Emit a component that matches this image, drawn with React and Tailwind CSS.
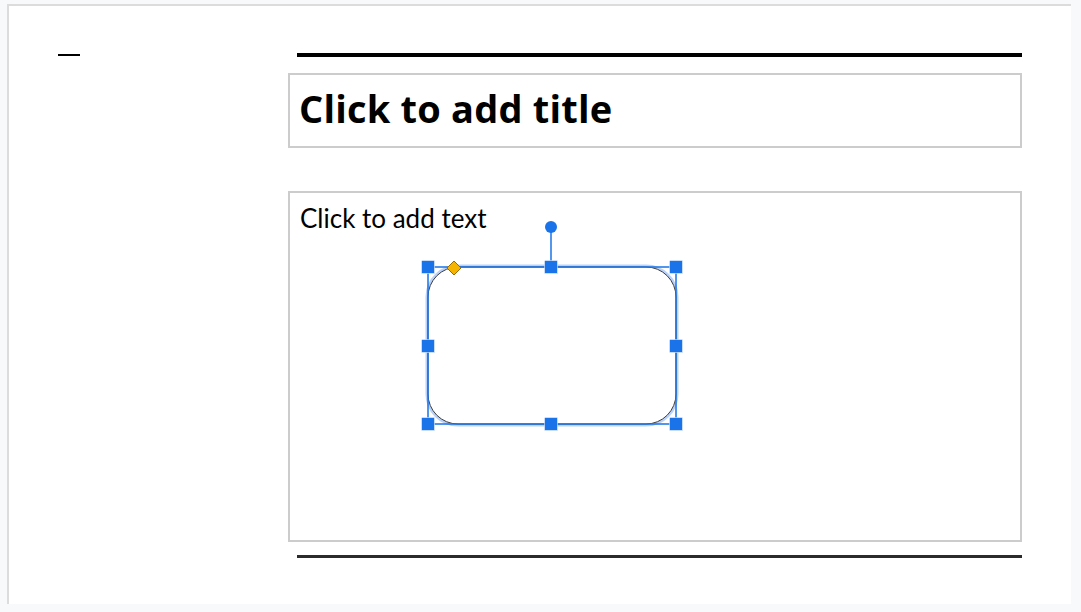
import React from "react";

// Selection handles around the shape (coords relative to body placeholder padding box)
const handles = [
  [138, 74], [261, 74], [386, 74],
  [138, 153], [386, 153],
  [138, 231], [261, 231], [386, 231],
];

const ShapeSelection = () => (
  <svg
    className="absolute left-0 top-0 pointer-events-none"
    width="730"
    height="347"
    viewBox="0 0 730 347"
  >
    {/* hover glow */}
    <rect x="138" y="74" width="248" height="157" rx="30" fill="none" stroke="#a8c7fa" strokeWidth="5" opacity="0.8" />
    {/* shape */}
    <rect x="138" y="74" width="248" height="157" rx="30" fill="#ffffff" stroke="#3c3c3c" strokeWidth="1" />
    {/* bounding box */}
    <rect x="138" y="74" width="248" height="157" fill="none" stroke="#1a73e8" strokeWidth="1.5" />
    {/* rotate handle */}
    <line x1="261" y1="34" x2="261" y2="68" stroke="#1a73e8" strokeWidth="1.5" />
    <circle cx="261" cy="34" r="6" fill="#1a73e8" />
    {handles.map(([x, y]) => (
      <rect key={x + "-" + y} x={x - 6.5} y={y - 6.5} width="13" height="13" fill="#1a73e8" stroke="#ffffff" strokeWidth="0.5" />
    ))}
    {/* corner radius adjust */}
    <path d="M164 68 L171 75 L164 82 L157 75 Z" fill="#f4b400" stroke="#9a6b00" strokeWidth="1" />
  </svg>
);

const App = () => {
  return (
    <div className="w-[1081px] h-[612px] bg-[#f8f9fb] pl-[7px] pt-[4px] overflow-hidden">
      <div className="w-[1064px] h-[600px] bg-white border-l-2 border-t-2 border-[#dcdcdc] flex">
        {/* left gutter */}
        <div className="w-[279px] shrink-0 pl-[49px] pt-[48px]">
          <div className="w-[22px] h-[2px] bg-black" />
        </div>

        {/* slide content */}
        <div className="w-[734px] flex flex-col pt-[47px]">
          <div className="ml-[9px] h-[4px] bg-black" />

          <div className="mt-[16px] h-[75px] border-2 border-[#cccccc] flex items-center pl-[9px] pb-[6px]">
            <span
              className="text-[38px] font-bold text-black leading-none tracking-[0.2px]"
              style={{ fontFamily: "'Open Sans', sans-serif" }}
            >
              Click to add title
            </span>
          </div>

          <div className="relative mt-[43px] h-[351px] border-2 border-[#cccccc] pl-[10px] pt-[12px]">
            <span
              className="text-[26px] text-black leading-none"
              style={{ fontFamily: "Lato, 'Noto Sans', sans-serif" }}
            >
              Click to add text
            </span>
            <ShapeSelection />
          </div>

          <div className="ml-[9px] mt-[13px] h-[3px] bg-[#2b2b2b]" />
        </div>
      </div>
    </div>
  );
};

export default App;
